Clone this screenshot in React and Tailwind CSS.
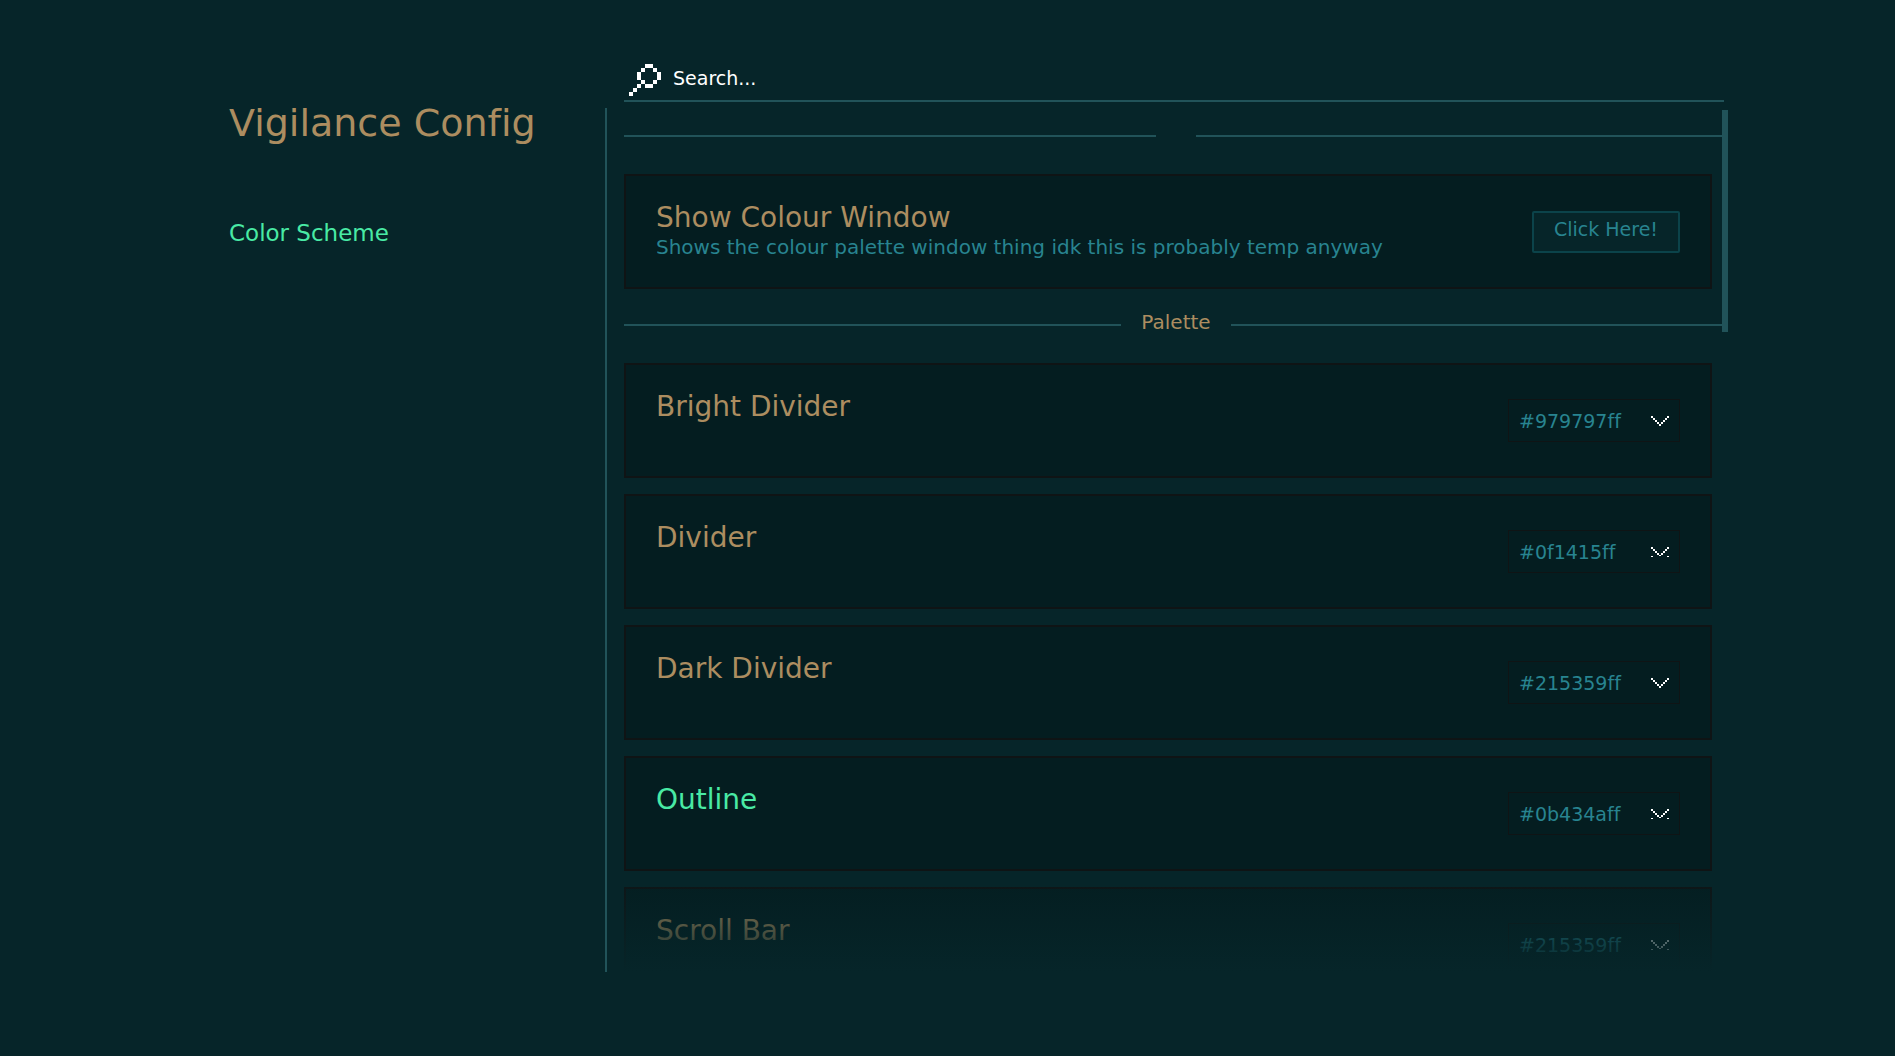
import React from "react";

const COLORS = [
  { name: "Bright Divider", value: "#979797ff", clipped: false },
  { name: "Divider", value: "#0f1415ff", clipped: true },
  { name: "Dark Divider", value: "#215359ff", clipped: false },
  { name: "Outline", value: "#0b434aff", clipped: true, active: true },
  { name: "Scroll Bar", value: "#215359ff", clipped: true },
];

function SearchIcon() {
  return (
    <svg
      width="32"
      height="32"
      viewBox="0 0 8 8"
      shapeRendering="crispEdges"
      fill="currentColor"
      aria-hidden="true"
      className="shrink-0"
    >
      <path d="M4 0h2v1h-2zM3 1h1v1h-1zM6 1h1v1h-1zM2 2h1v2h-1zM7 2h1v2h-1zM3 4h1v1h-1zM6 4h1v1h-1zM4 5h2v1h-2zM2 5h1v1h-1zM1 6h1v1h-1zM0 7h1v1h-1z" />
    </svg>
  );
}

function Chevron({ clipped }) {
  return (
    <svg
      width="18"
      height="10"
      viewBox="0 0 18 10"
      shapeRendering="crispEdges"
      fill="currentColor"
      aria-hidden="true"
      className="shrink-0 text-white"
    >
      <path d="M0 0h2v2h-2zM16 0h2v2h-2zM2 2h2v2h-2zM14 2h2v2h-2zM4 4h2v2h-2zM12 4h2v2h-2zM6 6h2v2h-2zM10 6h2v2h-2z" />
      {clipped ? (
        <path d="M8 8h2v1h-2zM0 9h2v1h-2zM16 9h2v1h-2z" />
      ) : (
        <path d="M8 8h2v2h-2z" />
      )}
    </svg>
  );
}

function SectionHeader({ children, className }) {
  return (
    <div className={`flex shrink-0 items-center ${className}`}>
      <div className="h-0.5 flex-1 bg-[#215359]" />
      <h2 className="px-5 pb-1.5 text-[20px] leading-6 text-[#ac8d60]">{children}</h2>
      <div className="h-0.5 flex-1 bg-[#215359]" />
    </div>
  );
}

function Card({ title, description, active, children }) {
  return (
    <section className="mr-4 flex min-h-[115px] shrink-0 items-center justify-between border-2 border-[#0f1415] bg-[#041d20] px-[30px]">
      <div className="self-start pt-6">
        <h3
          className={`text-[28px] leading-[35px] ${active ? "text-[#49eaa5]" : "text-[#ac8d60]"}`}
        >
          {title}
        </h3>
        {description && (
          <p className="text-[20px] leading-6 text-[#288490]">{description}</p>
        )}
      </div>
      {children}
    </section>
  );
}

export default function App() {
  return (
    <div className="flex h-screen bg-[#062529] pr-[167px] pb-[84px] pl-[229px] font-['DejaVu_Sans',sans-serif] [font-variant-ligatures:none]">
      <aside className="mt-[108px] w-[378px] shrink-0 border-r-2 border-[#215359]">
        <h1 className="text-[38px] leading-[30px] whitespace-nowrap text-[#ac8d60]">Vigilance Config</h1>
        <nav className="mt-[81px]">
          <button type="button" className="block text-[23px] leading-[29px] text-[#49eaa5]">
            Color Scheme
          </button>
        </nav>
      </aside>

      <main className="ml-[17px] flex min-w-0 flex-1 flex-col pt-16">
        <label className="mr-1 flex h-[38px] shrink-0 items-start gap-3 border-b-2 border-[#215359] pl-[5px] text-white">
          <SearchIcon />
          <input
            type="text"
            aria-label="Search"
            placeholder="Search..."
            className="h-7 min-w-0 flex-1 bg-transparent text-[19px] text-white outline-none placeholder:text-white"
          />
        </label>

        <div className="relative mt-2 min-h-0 flex-1">
          <div className="flex h-full flex-col overflow-y-auto [scrollbar-width:none]">
            <SectionHeader className="mb-[37px] h-[27px] pt-[25px]" />

            <Card
              title="Show Colour Window"
              description="Shows the colour palette window thing idk this is probably temp anyway"
            >
              <button
                type="button"
                className="h-[42px] w-[148px] shrink-0 rounded-xs border-2 border-[#0b434a] bg-[#062529] pb-1.5 text-[19px] leading-6 text-[#288490]"
              >
                Click Here!
              </button>
            </Card>

            <SectionHeader className="mb-0.5 h-[72px]">Palette</SectionHeader>

            <div className="flex flex-col gap-4">
              {COLORS.map((color) => (
                <Card key={color.name} title={color.name} active={color.active}>
                  <button
                    type="button"
                    aria-label={`${color.name} ${color.value}`}
                    className="flex h-[43px] w-[172px] shrink-0 items-center justify-between border border-[#0f1415] px-2.5 text-[19px] leading-6 text-[#288490]"
                  >
                    {color.value}
                    <Chevron clipped={color.clipped} />
                  </button>
                </Card>
              ))}
            </div>
          </div>

          <div className="pointer-events-none absolute inset-x-0 bottom-0 h-[100px] bg-linear-to-b from-[#062529]/0 to-[#062529]" />
          <div className="absolute top-0 right-0 h-[222px] w-1.5 bg-[#215359]" />
        </div>
      </main>
    </div>
  );
}
